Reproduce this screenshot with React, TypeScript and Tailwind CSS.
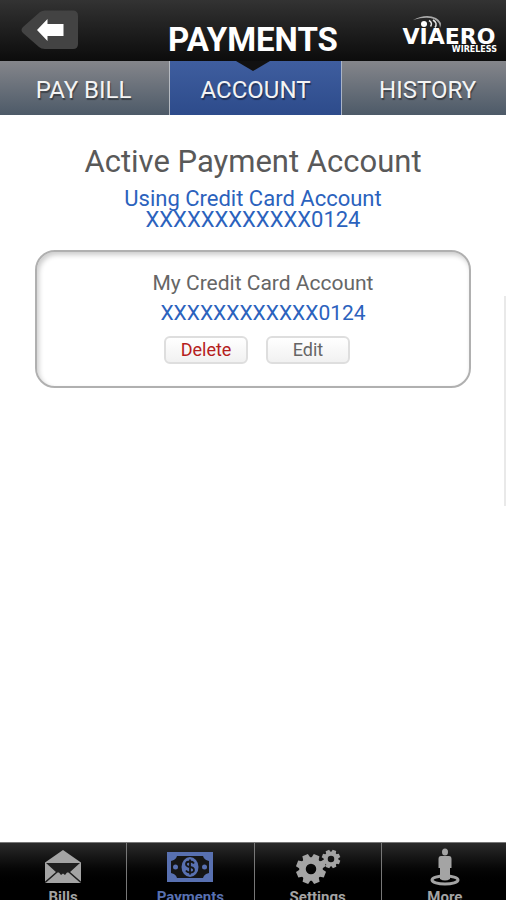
import type { ReactNode } from "react";

const tabShadow = "[text-shadow:1px_2px_1px_rgba(0,0,0,0.4)]";

function BackIcon() {
  return (
    <svg viewBox="0 0 58 40" className="h-10 w-[58px]" aria-hidden="true">
      <path d="M20 2 Q22 .5 25 .5 H53 Q58 .5 58 6 V34 Q58 39 53 39 H25 Q21 39 19 37 L3 23 Q0 20 3 17 Z" fill="#434343" />
      <path d="M17 20 L27.500 9 V14 H43.500 V26 H27.500 V31 Z" fill="#fff" />
    </svg>
  );
}

function Logo() {
  return (
    <svg viewBox="0 0 100 42" className="h-[42px] w-[100px]" role="img" aria-label="Viaero Wireless">
      <g fill="#fff" fontFamily="'DejaVu Sans', sans-serif" fontWeight="700">
        <text x="49" y="32" fontSize="22" textAnchor="middle">VIAERO</text>
        <text x="97" y="40" fontSize="8" textAnchor="end">WIRELESS</text>
      </g>
      <circle cx="24" cy="12" r="3" fill="#fff" />
      <path d="M13 8 Q26 1 36 6 Q43 10 40 16 Q40 10 34 7 Q26 4 13 8 Z" fill="#aaa" />
      <g fill="none" stroke="#e4e4e4" strokeWidth="1.500">
        <path d="M33 8 Q38 11 35 15.500" />
        <path d="M29 8.500 Q33 11 30.500 14.500" />
      </g>
    </svg>
  );
}

function BillsIcon() {
  return (
    <svg viewBox="0 0 36 34" className="h-[34px] w-9" aria-hidden="true">
      <path d="M18 0 L36 12.500 V33 H0 V12.500 Z" fill="#a4a4a4" />
      <path d="M1 13 H35 L24.500 22.500 L22 22.500 L20 25 L18 23.500 L16 25 L14 22.500 L11.500 22.500 Z" fill="#1f1f1f" />
      <path d="M12 22 L0 32.500 M24 22 L36 32.500" stroke="#1f1f1f" strokeWidth="1.600" />
    </svg>
  );
}

function PaymentsIcon() {
  return (
    <svg viewBox="0 0 46 30" className="h-[30px] w-[46px]" aria-hidden="true">
      <path d="M0 0 H46 V30 H0 Z" fill="#5870b0" />
      <path d="M10 4 H36 Q37 8 42 9 V21 Q37 22 36 26 H10 Q9 22 4 21 V9 Q9 8 10 4 Z" fill="#151515" />
      <ellipse cx="23" cy="15" rx="8.500" ry="10" fill="#5870b0" />
      <circle cx="8.500" cy="15" r="2.500" fill="#5870b0" />
      <circle cx="37.500" cy="15" r="2.500" fill="#5870b0" />
      <path d="M27 11.500 Q26 9.500 23 9.500 Q19 9.500 19 12 Q19 14.500 23 15 Q27 15.500 27 18 Q27 20.500 23 20.500 Q20 20.500 19 18.500 M23 7.500 V22.500" fill="none" stroke="#151515" strokeWidth="1.800" />
    </svg>
  );
}

function Gear({ x, y, scale }: { x: number; y: number; scale: number }) {
  return (
    <g transform={`translate(${x} ${y}) scale(${scale})`}>
      <circle r="8.500" fill="none" stroke="#a4a4a4" strokeWidth="6.500" />
      {[22, 67, 112, 157, 202, 247, 292, 337].map((angle) => (
        <path key={angle} d="M-4 -10 L-3 -15 H3 L4 -10 Z" fill="#a4a4a4" transform={`rotate(${angle})`} />
      ))}
    </g>
  );
}

function SettingsIcon() {
  return (
    <svg viewBox="0 0 46 36" className="h-9 w-[46px]" aria-hidden="true">
      <Gear x={16} y={20} scale={1} />
      <Gear x={36} y={10} scale={0.62} />
    </svg>
  );
}

function MoreIcon() {
  return (
    <svg viewBox="0 0 30 38" className="h-[38px] w-[30px]" aria-hidden="true" fill="#a4a4a4">
      <ellipse cx="15" cy="32" rx="13" ry="4" fill="none" stroke="#a4a4a4" strokeWidth="3" />
      <ellipse cx="15" cy="4" rx="3" ry="3.500" />
      <path d="M11 8 H19 Q21.500 8 21.500 11 V20 H20 V31 Q15 34 10 31 V20 H8.500 V11 Q8.500 8 11 8 Z" />
    </svg>
  );
}

function Tab({ label, active = false }: { label: string; active?: boolean }) {
  return (
    <button
      type="button"
      aria-pressed={active}
      className={`flex w-[34%] shrink-0 items-center justify-center border-r pt-1 text-2xl text-[#f4f4f4] first:-ml-0.5 ${tabShadow} ${
        active
          ? "border-[#a9b4c8] bg-linear-to-b from-[#3f5e9f] to-[#2d4b8b]"
          : "border-[#b5bac1] bg-linear-to-b from-[#85868b] to-[#4d5a68]"
      }`}
    >
      {label}
    </button>
  );
}

function NavItem({ label, icon, active = false }: { label: string; icon: ReactNode; active?: boolean }) {
  return (
    <a
      href="#"
      aria-current={active ? "page" : undefined}
      className={`flex flex-1 flex-col items-center border-r border-[#777] last:border-r-0 ${active ? "text-[#5870b0]" : "text-[#a4a4a4]"}`}
    >
      <span className="flex h-[46px] items-center justify-center pt-0.5">{icon}</span>
      <span className="text-[15px] leading-4 font-bold">{label}</span>
    </a>
  );
}

function CardButton({ label, color }: { label: string; color: string }) {
  return (
    <button
      type="button"
      className={`h-7 w-[84px] rounded-md border-2 border-[#dedede] bg-linear-to-b from-white to-[#f1f1f1] text-lg leading-6 ${color}`}
    >
      {label}
    </button>
  );
}

export default function App() {
  return (
    <div className="flex h-screen flex-col overflow-hidden bg-white font-[Roboto,sans-serif]">
      <header className="relative grid h-[61px] shrink-0 grid-cols-[1fr_auto_1fr] bg-linear-to-b from-[#333] to-[#0c0c0c]">
        <button type="button" aria-label="Back" className="mt-2.5 ml-5 h-10 w-[58px]">
          <BackIcon />
        </button>
        <h1 className="pt-5 text-[33px] leading-10 font-bold text-white">PAYMENTS</h1>
        <div className="mt-3 mr-1.5 justify-self-end">
          <Logo />
        </div>
        <svg viewBox="0 0 34 10" className="absolute top-full left-1/2 h-2.5 w-[34px] -translate-x-1/2" aria-hidden="true">
          <path d="M0 0 H34 L17 10 Z" fill="#111" />
        </svg>
      </header>

      <nav className="flex h-[54px] shrink-0 overflow-hidden bg-[#69707a]" aria-label="Payment sections">
        <Tab label="PAY BILL" />
        <Tab label="ACCOUNT" active />
        <Tab label="HISTORY" />
      </nav>

      <main className="flex flex-1 flex-col">
        <section className="pt-7 text-center">
          <h2 className="text-[31px] leading-[38px] text-[#595959]">Active Payment Account</h2>
          <p className="mt-[7px] text-[22px] leading-[21px] text-[#2b62bd]">
            Using Credit Card Account
            <br />
            XXXXXXXXXXXX0124
          </p>
        </section>

        <section className="mx-[35px] mt-5 h-[138px] rounded-[20px] border-2 border-[#b0b0b0] pt-4 pl-5 text-center shadow-[inset_2px_3px_5px_rgba(0,0,0,0.2)]">
          <h3 className="text-[21px] leading-[30px] text-[#666]">My Credit Card Account</h3>
          <p className="text-[21px] leading-[30px] text-[#2b62bd]">XXXXXXXXXXXX0124</p>
          <div className="mt-2 mr-3 flex justify-center gap-[18px]">
            <CardButton label="Delete" color="text-[#b5201c]" />
            <CardButton label="Edit" color="text-[#666]" />
          </div>
        </section>
      </main>

      <div className="fixed top-[296px] right-0 h-[210px] w-0.5 bg-[#e9e9e9]" />

      <footer className="h-[58px] shrink-0 overflow-hidden border-t border-[#777] bg-linear-to-b from-[#2b2b2b] to-black to-80%">
        <nav className="-mr-0.5 flex h-16" aria-label="Main">
          <NavItem label="Bills" icon={<BillsIcon />} />
          <NavItem label="Payments" icon={<PaymentsIcon />} active />
          <NavItem label="Settings" icon={<SettingsIcon />} />
          <NavItem label="More" icon={<MoreIcon />} />
        </nav>
      </footer>
    </div>
  );
}
